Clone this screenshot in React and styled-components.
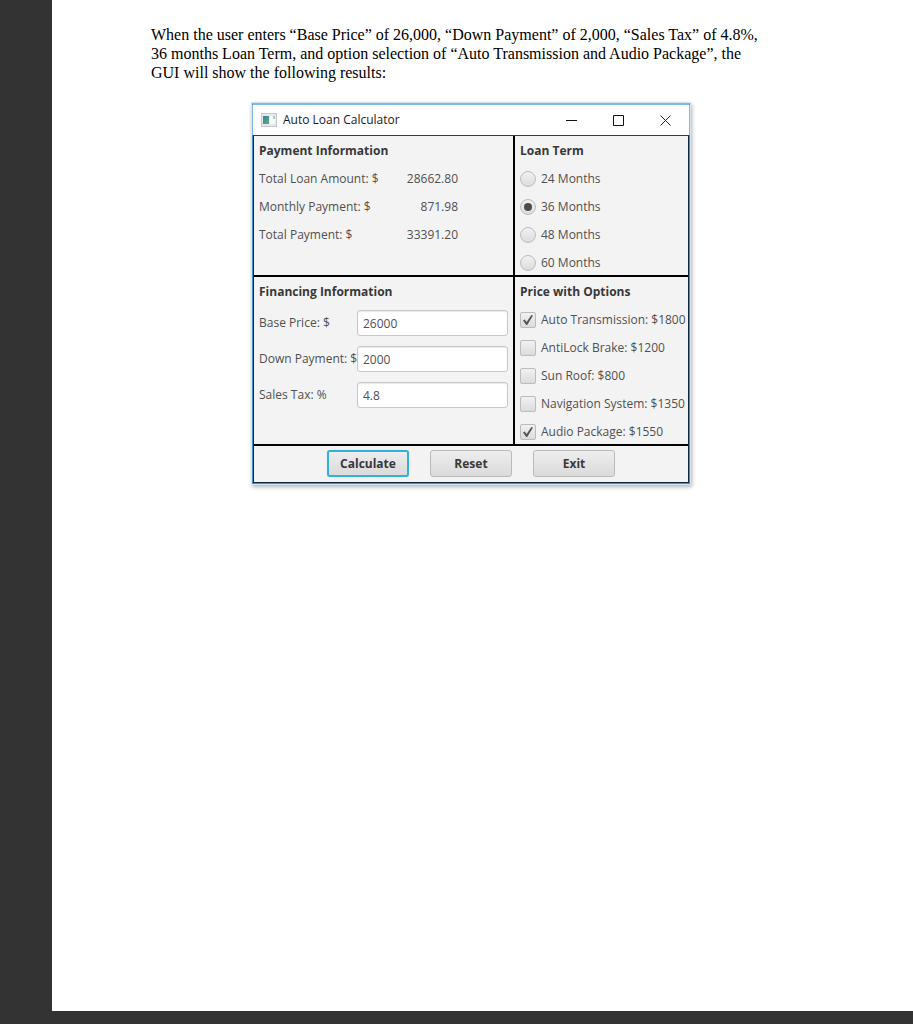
import React, { useState } from "react";
import styled, { createGlobalStyle, css } from "styled-components";

const GlobalStyle = createGlobalStyle`
  * { box-sizing: border-box; }
  body { margin: 0; background: #333333; }
`;

const Viewer = styled.div`
  min-height: 100vh;
  padding: 0 0 13px 52px;
  background: #333333;
`;

const Page = styled.main`
  min-height: calc(100vh - 13px);
  padding: 25px 99px;
  background: #ffffff;
`;

const Intro = styled.p`
  margin: 0 0 21px;
  color: #000000;
  font: 16px/19px "Liberation Serif", serif;
  white-space: nowrap;
`;

const Window = styled.section`
  width: fit-content;
  margin-left: 101px;
  border: 1px solid #3f8fcb;
  border-top: 2px solid #7db9e8;
  box-shadow: 0 0 0 1px #d5e4ef, 1px 2px 4px 1px rgba(0, 0, 0, 0.3);
  background: #f3f3f3;
  color: #505050;
  font: 12px/20px "Open Sans", "Noto Sans", sans-serif;
`;

const TitleBar = styled.header`
  display: flex;
  align-items: center;
  height: 30px;
  padding-left: 8px;
  background: #ffffff;
  box-shadow: -1px 0 #7db9e8, 1px 0 #7db9e8;
  color: #1a1a1a;
`;

const Title = styled.h1`
  flex: 1;
  margin: 0 0 0 6px;
  font-size: 12px;
  font-weight: 400;
`;

const CaptionButton = styled.button`
  display: flex;
  align-items: center;
  justify-content: center;
  width: 47px;
  height: 30px;
  padding: 0;
  border: 0;
  background: transparent;
`;

const Frame = styled.form`
  border: 1px solid #10283c;
  border-top-color: #3c3c3c;
`;

const Panels = styled.div`
  display: grid;
  grid-template-columns: 259px 173px;
  gap: 2px;
  border-bottom: 2px solid #000000;
  background: #000000;
`;

const Panel = styled.section`
  min-width: 0;
  padding: 5px 5px 2px;
  background: #f3f3f3;
`;

const Heading = styled.h2`
  margin: 0 0 8px;
  color: #383838;
  font-size: 12px;
  line-height: 20px;
  font-weight: 700;
`;

const Stack = styled.div`
  display: flex;
  flex-direction: column;
  gap: ${(p) => p.$gap}px;
`;

const Result = styled.div`
  display: flex;
  justify-content: space-between;
  width: 199px;
`;

const Field = styled.div`
  display: grid;
  grid-template-columns: 98px 1fr;
  align-items: center;
  white-space: nowrap;
`;

const TextBox = styled.input`
  width: 100%;
  height: 26px;
  padding: 0 5px;
  border: 1px solid #c8c8c8;
  border-radius: 3px;
  background: #ffffff;
  box-shadow: inset 0 1px 1px #e8e8e8;
  color: #505050;
  font: inherit;
`;

const Choice = styled.label`
  display: flex;
  align-items: center;
  gap: 5px;
  height: 20px;
  white-space: nowrap;
`;

const mark = css`
  appearance: none;
  flex: none;
  display: grid;
  place-items: center;
  width: 16px;
  height: 16px;
  margin: 0;
  border: 1px solid #bcbcbc;
  background: linear-gradient(#f1f1f1, #dcdcdc);
`;

const Radio = styled.input`
  ${mark}
  border-radius: 50%;
  &:checked::before {
    content: "";
    width: 8px;
    height: 8px;
    border-radius: 50%;
    background: #4b4b4b;
  }
`;

const Check = styled.input`
  ${mark}
  border-radius: 2px;
  &:checked::before {
    content: "";
    width: 10px;
    height: 10px;
    background: #555555;
    clip-path: polygon(0 55%, 16% 44%, 36% 70%, 84% 0, 100% 4%, 42% 100%, 32% 100%);
  }
`;

const Actions = styled.div`
  display: flex;
  justify-content: center;
  gap: 21px;
  padding: 4px 0 5px;
`;

const Action = styled.button`
  width: 82px;
  height: 27px;
  padding: 0;
  border: 1px solid #bababa;
  border-radius: 3px;
  background: linear-gradient(#eeeeee, #dadada);
  color: #383838;
  font: 700 12px/20px "Open Sans", "Noto Sans", sans-serif;
  ${(p) =>
    p.$primary &&
    css`
      border: 2px solid #35b0dc;
      box-shadow: 0 0 1px #8fd4ec;
    `}
`;

const results = [
  ["Total Loan Amount: $", "28662.80"],
  ["Monthly Payment: $", "871.98"],
  ["Total Payment: $", "33391.20"],
];

const fields = [
  ["base", "Base Price: $", "26000"],
  ["down", "Down Payment: $", "2000"],
  ["tax", "Sales Tax: %", "4.8"],
];

const terms = [24, 36, 48, 60];

const options = [
  ["Auto Transmission: $1800", true],
  ["AntiLock Brake: $1200", false],
  ["Sun Roof: $800", false],
  ["Navigation System: $1350", false],
  ["Audio Package: $1550", true],
];

function AppIcon() {
  return (
    <svg width="16" height="14" viewBox="0 0 16 14" aria-hidden="true">
      <defs>
        <linearGradient id="pane" x1="0" y1="0" x2="1" y2="1">
          <stop offset="0" stopColor="#3f79a8" />
          <stop offset="1" stopColor="#5fae7c" />
        </linearGradient>
      </defs>
      <rect x="0.5" y="0.5" width="15" height="13" fill="#e6e9eb" stroke="#c3c8cb" />
      <rect x="2" y="3" width="6" height="8" fill="url(#pane)" />
      <rect x="9" y="3" width="3" height="8" fill="#f8f8f8" />
      <rect x="12" y="3" width="2" height="3" fill="#a9cfc3" />
      <rect x="12" y="6" width="2" height="5" fill="#f8f8f8" />
    </svg>
  );
}

export default function App() {
  const [term, setTerm] = useState(36);

  return (
    <Viewer>
      <GlobalStyle />
      <Page>
        <Intro>
          When the user enters “Base Price” of 26,000, “Down Payment” of 2,000, “Sales Tax” of 4.8%,
          <br />
          36 months Loan Term, and option selection of “Auto Transmission and Audio Package”, the
          <br />
          GUI will show the following results:
        </Intro>
        <Window>
          <TitleBar>
            <AppIcon />
            <Title>Auto Loan Calculator</Title>
            <CaptionButton type="button" aria-label="Minimize">
              <svg width="11" height="11" viewBox="0 0 11 11" stroke="#111111">
                <path d="M0 5.5h11" />
              </svg>
            </CaptionButton>
            <CaptionButton type="button" aria-label="Maximize">
              <svg width="11" height="11" viewBox="0 0 11 11" fill="none" stroke="#111111">
                <path d="M0.5 0.5h10v10h-10z" />
              </svg>
            </CaptionButton>
            <CaptionButton type="button" aria-label="Close">
              <svg width="11" height="11" viewBox="0 0 11 11" stroke="#222222">
                <path d="M0.5 0.5l10 10M10.5 0.5l-10 10" />
              </svg>
            </CaptionButton>
          </TitleBar>
          <Frame onSubmit={(e) => e.preventDefault()}>
            <Panels>
              <Panel>
                <Heading>Payment Information</Heading>
                <Stack $gap={8}>
                  {results.map(([label, value]) => (
                    <Result key={label}>
                      <span>{label}</span>
                      <output>{value}</output>
                    </Result>
                  ))}
                </Stack>
              </Panel>
              <Panel>
                <Heading>Loan Term</Heading>
                <Stack $gap={8}>
                  {terms.map((months) => (
                    <Choice key={months}>
                      <Radio
                        type="radio"
                        name="term"
                        checked={term === months}
                        onChange={() => setTerm(months)}
                      />
                      {months} Months
                    </Choice>
                  ))}
                </Stack>
              </Panel>
              <Panel>
                <Heading>Financing Information</Heading>
                <Stack $gap={10}>
                  {fields.map(([id, label, value]) => (
                    <Field key={id}>
                      <label htmlFor={id}>{label}</label>
                      <TextBox id={id} type="text" defaultValue={value} />
                    </Field>
                  ))}
                </Stack>
              </Panel>
              <Panel>
                <Heading>Price with Options</Heading>
                <Stack $gap={8}>
                  {options.map(([label, checked]) => (
                    <Choice key={label}>
                      <Check type="checkbox" defaultChecked={checked} />
                      {label}
                    </Choice>
                  ))}
                </Stack>
              </Panel>
            </Panels>
            <Actions>
              <Action type="submit" $primary>
                Calculate
              </Action>
              <Action type="reset">Reset</Action>
              <Action type="button">Exit</Action>
            </Actions>
          </Frame>
        </Window>
      </Page>
    </Viewer>
  );
}
